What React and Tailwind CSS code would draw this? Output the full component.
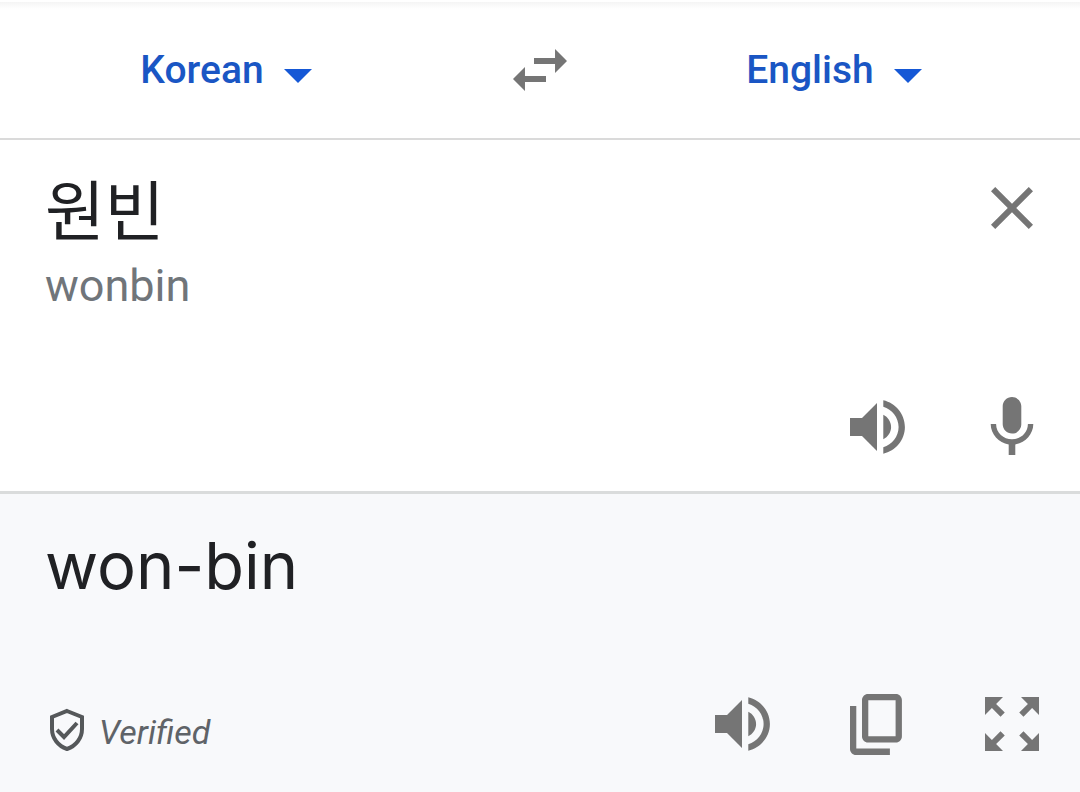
import { useState } from "react";

const Icon = ({ children }) => (
  <svg viewBox="0 0 24 24" fill="currentColor" className="w-18 h-18" aria-hidden="true">
    {children}
  </svg>
);

const IconButton = ({ label, onClick, children }) => (
  <button
    type="button"
    aria-label={label}
    onClick={onClick}
    className="shrink-0 text-[#757575] cursor-pointer"
  >
    <Icon>{children}</Icon>
  </button>
);

const VolumeIcon = () => (
  <path d="M3 9v6h4l5 5V4L7 9H3zm13.7 3c0-1.77-1.1-3.35-2.6-4.1v8.2c1.5-.75 2.6-2.33 2.6-4.1zM14.1 3.1v2.15c2.9.86 5.1 3.58 5.1 6.75s-2.2 5.89-5.1 6.75v2.15c4.05-.91 7.2-4.55 7.2-8.9s-3.15-7.99-7.2-8.9z" />
);

const LanguageSelect = ({ label, value, onChange }) => (
  <label className="flex items-center gap-5 text-[#1a56c4]">
    <select
      aria-label={label}
      value={value}
      onChange={(e) => onChange(e.target.value)}
      className="appearance-none field-sizing-content bg-transparent text-[39px] leading-12 font-medium outline-none cursor-pointer"
    >
      <option>Korean</option>
      <option>English</option>
    </select>
    <svg viewBox="0 0 28 14" className="w-7 h-3.5 mt-3 text-[#1558d6]" fill="currentColor" aria-hidden="true">
      <path d="M0 0h28L14 14z" />
    </svg>
  </label>
);

const App = () => {
  const [from, setFrom] = useState("Korean");
  const [to, setTo] = useState("English");
  const [text, setText] = useState("원빈");

  const swap = () => {
    setFrom(to);
    setTo(from);
  };

  return (
    <div className="min-h-screen flex flex-col bg-white font-[Roboto,'Noto_Sans_CJK_KR',sans-serif]">
      <header className="border-t-2 border-b-2 border-t-white border-b-[#dadada] bg-linear-to-b from-[#f5f5f5] to-white to-5% grid grid-cols-[1fr_auto_1fr] items-center py-8">
        <div className="flex justify-center pr-13">
          <LanguageSelect label="Source language" value={from} onChange={setFrom} />
        </div>
        <IconButton label="Swap languages" onClick={swap}>
          <path d="M6.99 11L3 15l3.99 4v-3H14v-2H6.99v-3zM21 9l-3.99-4v3H10v2h7.01v3L21 9z" />
        </IconButton>
        <div className="flex justify-center pl-3">
          <LanguageSelect label="Target language" value={to} onChange={setTo} />
        </div>
      </header>

      <section className="border-b-3 border-[#dadcdc] pt-8 pb-7 pl-[45px] pr-8">
        <div className="flex items-start">
          <div className="flex-1 min-w-0 pt-0.5">
            <input
              type="text"
              aria-label="Source text"
              value={text}
              onChange={(e) => setText(e.target.value)}
              className="block w-full h-20 text-[65px] text-[#202124] outline-none"
            />
            <p className="text-[45px] leading-16 text-[#70757a]">wonbin</p>
          </div>
          <IconButton label="Clear text" onClick={() => setText("")}>
            <path d="M19 6.41L17.59 5 12 10.59 6.41 5 5 6.41 10.59 12 5 17.59 6.41 19 12 13.41 17.59 19 19 17.59 13.41 12z" />
          </IconButton>
        </div>
        <div className="flex justify-end gap-[63px] pt-[73px]">
          <IconButton label="Listen to source text">
            <VolumeIcon />
          </IconButton>
          <IconButton label="Translate by voice">
            <path d="M12 14.2c1.7 0 3.1-1.4 3.1-3.1V5.1C15.1 3.4 13.7 2 12 2S8.9 3.4 8.9 5.1v6c0 1.7 1.4 3.1 3.1 3.1zm5.3-3.2c0 3-2.5 5.100-5.3 5.100S6.700 14 6.700 11H4.900c0 3.400 2.700 6.300 6 6.800v3.500h2.200v-3.500c3.300-.5 6-3.400 6-6.800z" />
          </IconButton>
        </div>
      </section>

      <section className="flex-1 flex flex-col justify-between bg-[#f8f9fb] pt-8 pb-8 pl-[45px] pr-8">
        <p className="text-[65px] leading-20 text-[#202124] font-[Inter,sans-serif]">won-bin</p>
        <div className="flex items-center justify-between">
          <div className="flex items-center gap-2.5 pt-3">
            <svg viewBox="0 0 42 48" className="w-11 h-12 text-[#55585a]" fill="none" stroke="currentColor" aria-hidden="true">
              <path d="M21 5L36 11v12c0 9-6 17-15 20C12 40 6 32 6 23V11z" strokeWidth="4" />
              <path d="M11 24l7 7 13-14" strokeWidth="4" />
            </svg>
            <span className="pt-1 text-[34px] leading-10 italic text-[#5f6368]">Verified</span>
          </div>
          <div className="flex gap-[63px]">
            <IconButton label="Listen to translation">
              <VolumeIcon />
            </IconButton>
            <IconButton label="Copy translation">
              <path d="M9 18.2c-1.1 0-2-.9-2-2V4c0-1.1.9-2 2-2h9.3c1.1 0 2 .9 2 2v12.2c0 1.1-.9 2-2 2zm.1-2.1h9.100V4.100H9.100zM5 22.300c-1.100 0-2-.9-2-2V6h2.100v14.200h11.200v2.100z" />
            </IconButton>
            <IconButton label="Full screen">
              <path d="M15 3l2.3 2.3-2.89 2.87 1.42 1.42L18.7 6.7 21 9V3zM3 9l2.3-2.3 2.87 2.89 1.42-1.42L6.7 5.3 9 3H3zM9 21l-2.3-2.3 2.89-2.87-1.42-1.42L5.3 17.3 3 15v6zM21 15l-2.3 2.3-2.87-2.89-1.42 1.42 2.89 2.87L15 21h6z" />
            </IconButton>
          </div>
        </div>
      </section>
    </div>
  );
};

export default App;
